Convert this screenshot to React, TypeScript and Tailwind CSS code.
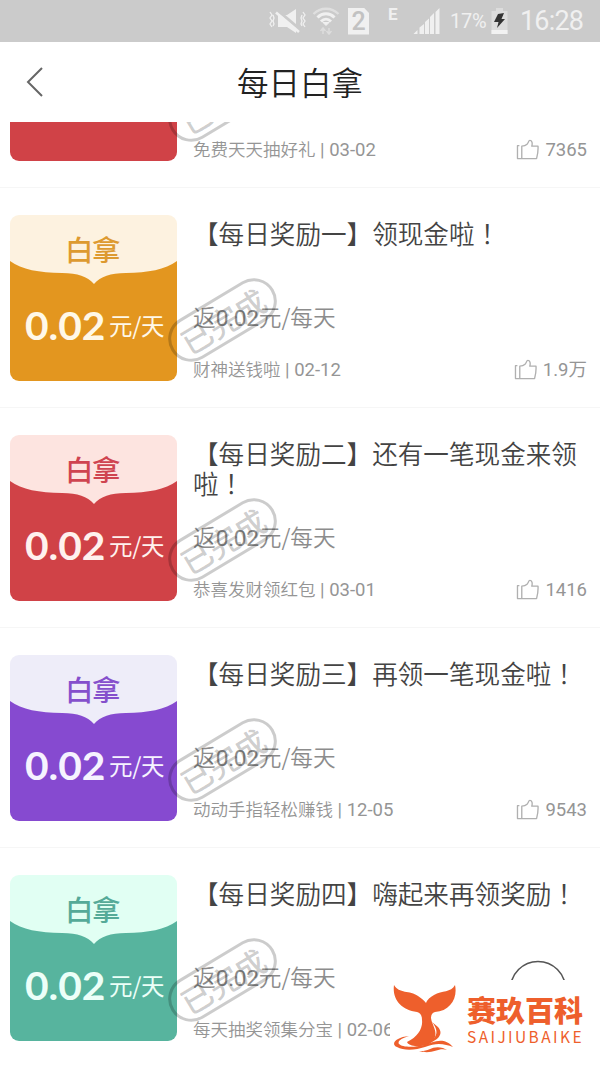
import React from "react";

type Theme = { fill: string; light: string; wave: string; ink: string; num: string };

const themes: Record<string, Theme> = {
  red: { fill: "bg-[#d04247]", light: "bg-[#fde4e0]", wave: "fill-[#d04247]", ink: "text-[#cf4450]", num: "text-[#fff1ee]" },
  orange: { fill: "bg-[#e3961f]", light: "bg-[#fdf2e0]", wave: "fill-[#e3961f]", ink: "text-[#dd9a30]", num: "text-[#fff8e8]" },
  purple: { fill: "bg-[#864ad0]", light: "bg-[#eeedf9]", wave: "fill-[#864ad0]", ink: "text-[#8550cc]", num: "text-[#f6f3ff]" },
  green: { fill: "bg-[#57b49e]", light: "bg-[#e1fff3]", wave: "fill-[#57b49e]", ink: "text-[#55aa98]", num: "text-[#ecfff8]" },
};

type Item = { theme: string; title: string; source: string; date: string; likes: string };

const items: Item[] = [
  { theme: "red", title: "", source: "免费天天抽好礼", date: "03-02", likes: "7365" },
  { theme: "orange", title: "【每日奖励一】领现金啦", source: "财神送钱啦", date: "02-12", likes: "1.9万" },
  { theme: "red", title: "【每日奖励二】还有一笔现金来领啦", source: "恭喜发财领红包", date: "03-01", likes: "1416" },
  { theme: "purple", title: "【每日奖励三】再领一笔现金啦", source: "动动手指轻松赚钱", date: "12-05", likes: "9543" },
  { theme: "green", title: "【每日奖励四】嗨起来再领奖励", source: "每天抽奖领集分宝", date: "02-06", likes: "" },
];

function StatusBar() {
  return (
    <header className="flex h-[42px] shrink-0 items-center bg-[#cbcbcb] pl-[268px] text-[#f0f0f0]">
      <svg className="h-[28px] w-[40px] shrink-0" viewBox="0 0 40 28" fill="none" stroke="currentColor" strokeWidth="1.7">
        <path d="M2 5l2 3-2 3 2 3-2 3 2 3M5 8l1 3-1 3 1 3-1 2M35 5l2 3-2 3 2 3-2 3 2 3M34 8l-1 3 1 3-1 3 1 2" strokeWidth="1.3" />
        <path d="M10 8h9l9-6v24l-9-6h-9z" fill="currentColor" stroke="none" />
        <path d="M9 3 32 22.500" stroke="#cbcbcb" strokeWidth="3" />
        <path d="M8 5.500 31 25" strokeWidth="2.6" />
      </svg>
      <svg className="ml-[4px] h-[30px] w-[28px] shrink-0" viewBox="0 0 28 30" fill="none" stroke="currentColor">
        <path d="M1.500 8c7-7 18-7 25 0" strokeWidth="2.400" opacity=".55" />
        <path d="M5.500 11.500c5-5 12-5 17 0M9 15.500c3-3 7-3 10 0" strokeWidth="3" />
        <path d="m11 16.500 3 3 3-3z" fill="currentColor" />
        <path d="M11 28v-6m-2.500 3L11 22l2.500 3M17 22v6m-2.500-3 2.500 3 2.500-3" strokeWidth="1.500" opacity=".5" />
      </svg>
      <div className="ml-[8px] flex h-[27px] w-[21px] items-center justify-center bg-[#f0f0f0] font-['Roboto',sans-serif] text-[25px] font-medium leading-none text-[#c2c2c2] [clip-path:polygon(0_0,75%_0,100%_20%,100%_100%,0_100%)]">2</div>
      <span className="-mt-[14px] ml-[19px] w-[10px] font-['Roboto',sans-serif] text-[17px] font-bold leading-none">E</span>
      <svg className="ml-[15px] h-[28px] w-[27px] shrink-0" viewBox="0 0 26 28" fill="currentColor">
        <path d="M0 27 4 23v4zM6 27v-6.500L10.500 17v10zM11.500 27V15l4-3.500V27zM16.500 27V10l4-4v21zM22 27V5l4-4v26z" />
      </svg>
      <span className="ml-[10px] w-[37px] font-['Roboto',sans-serif] text-[20px] leading-none tracking-[-0.3px]">17%</span>
      <svg className="ml-[4px] h-[28px] w-[17px] shrink-0" viewBox="0 0 17 28">
        <path d="M5 1h7v3h4.500v23H.5V4H5z" fill="#dcdcdc" />
        <path d="M.5 23h16v4H.5z" fill="#f2f2f2" />
        <path d="m7 7 6-1-2.500 6H14L6 21l1.500-6H3z" fill="#333" />
      </svg>
      <span className="ml-[12px] font-['Roboto',sans-serif] text-[27px] leading-none tracking-[-0.8px]">16:28</span>
    </header>
  );
}

function Card({ theme }: { theme: Theme }) {
  return (
    <div className="h-[166px] w-[167px] shrink-0">
      <div className={`relative h-[70px] rounded-t-[9px] pr-[3px] pt-[17px] text-center text-[28.500px] font-medium leading-[34px] tracking-[-1.5px] ${theme.light} ${theme.ink}`}>
        <svg className="absolute inset-0 h-full w-full" viewBox="0 0 167 70" preserveAspectRatio="none">
          <path className={theme.wave} d="M0 46C12 55 29 57.500 52 58C68 58.500 77 61 84 69C91 61 100 58.500 116 58C138 57.500 155 55 167 46V71H0Z" />
        </svg>
        <span className="relative">白拿</span>
      </div>
      <div className={`flex h-[96px] items-center whitespace-nowrap rounded-b-[9px] pb-[16px] pl-[15px] leading-[40px] ${theme.fill} ${theme.num}`}>
        <span className="w-[84px] origin-left scale-x-[1.07] font-['Lato',sans-serif] text-[38px] font-bold">0.02</span>
        <span className="text-[23.500px] tracking-[-0.3px]">元/天</span>
      </div>
    </div>
  );
}

function ThumbIcon() {
  return (
    <svg className="h-[21px] w-[23px]" viewBox="0 0 24 22" fill="none" stroke="#b0b0b0" strokeWidth="1.4" strokeLinejoin="round">
      <path d="M3.500 7H1.500V20.500H21.500C22.500 17 23.300 12 23 7.500H16.500C17.500 4 16.500 1.500 14.500 1.500C13 1.500 13 4 11.500 5.500C10 7 8.500 7.500 6 7.500V20.500" />
    </svg>
  );
}

function Stamp() {
  return (
    <div className="absolute left-[163px] top-[109px] flex h-[46px] w-[119px] rotate-[-31deg] items-center justify-center whitespace-nowrap rounded-full border-[3px] border-black/20 text-[31px] font-medium leading-none text-black/20">
      已完成
    </div>
  );
}

function Row({ item }: { item: Item }) {
  return (
    <li className="relative flex h-[220px] shrink-0 border-b border-[#f6f6f6] pl-[10px] pr-[13px] pt-[27px]">
      <Card theme={themes[item.theme]} />
      <div className="ml-[16px] flex h-[167px] min-w-0 flex-1 flex-col">
        <h2 className="h-[90px] pt-[3px] text-[25.6px] font-[350] leading-[30px] text-[#444]">
          {item.title}
          {item.title && <span className="font-['Noto_Sans_CJK_TC',sans-serif]" lang="zh-TW">！</span>}
        </h2>
        <p className="pt-[1px] text-[22.700px] font-[350] leading-[28px] text-[#8c8c8c]">
          返<span className="font-['Roboto',sans-serif] font-normal tracking-[-0.3px]">0.02</span>元/每天
        </p>
        <div className="mt-[24px] flex items-center justify-between text-[17.5px] font-[350] leading-[24px] text-[#959595]">
          <span className="whitespace-nowrap">
            {item.source}
            <span className="font-['Roboto',sans-serif] text-[18.500px] font-normal"> | {item.date}</span>
          </span>
          {item.likes && (
            <span className="flex items-center gap-[6px] font-['Roboto','Noto_Sans_CJK_SC',sans-serif] text-[18.500px] font-normal">
              <ThumbIcon />
              {item.likes}
            </span>
          )}
        </div>
      </div>
      <Stamp />
    </li>
  );
}

function Watermark() {
  return (
    <div className="absolute bottom-0 right-0 flex h-[87px] w-[210px] bg-white text-[#ee5f2c]">
      <svg className="ml-[3px] mt-[5px] h-[68px] w-[64px] shrink-0" viewBox="0 0 64 68" fill="currentColor">
        <path d="M1 0C6 9 17 5 25 11Q31 15 33 18Q35 13 41 10C49 5 58 8 62 0C65 13 57 26 42 27Q38 28 38 33C39 40 44 45 42 52C40 59 31 62 22 61Q15 60 14 57C25 52 30 43 29 35Q29 28 24 27C8 25-1 14 1 0Z" />
        <path d="M16 51C3 52-3 59 4 62C11 66 23 65 32 62C44 57 52 59 60 62C51 51 40 57 31 60C20 63 9 62 6 59C4 56 9 53 16 51Z" />
        <path d="M26 66C36 67 39 60 50 63L54 65C45 62 40 70 26 66Z" />
        <path d="M39 37C48 48 42 54 34 59C43 56 52 50 45 42Z" />
      </svg>
      <div className="ml-[10px] pt-[13px]">
        <div className="text-[29px] font-black leading-[32px]">赛玖百科</div>
        <div className="mt-[2px] text-[15.5px] leading-[18px] tracking-[2.4px]">SAIJIUBAIKE</div>
      </div>
    </div>
  );
}

export default function App() {
  return (
    <div className="relative flex h-[1067px] w-[600px] flex-col overflow-hidden bg-white font-['Noto_Sans_CJK_SC',sans-serif]">
      <StatusBar />
      <nav className="grid h-[80px] shrink-0 grid-cols-[100px_1fr_100px] items-center">
        <svg className="ml-[25px] h-[30px] w-[20px]" viewBox="0 0 20 30" fill="none" stroke="#666" strokeWidth="2">
          <path d="M17 1 3 15l14 14" />
        </svg>
        <h1 className="text-center text-[31.500px] font-[350] leading-none text-[#222]">每日白拿</h1>
      </nav>
      <main className="flex-1 overflow-hidden">
        <ul className="-mt-[154px] flex flex-col">
          {items.map((item, i) => (
            <Row key={i} item={item} />
          ))}
        </ul>
      </main>
      <svg className="absolute left-[508px] top-[959px] h-[21px] w-[60px]" viewBox="0 0 60 21" fill="none" stroke="#555" strokeWidth="1.6">
        <circle cx="30" cy="30" r="27.500" />
      </svg>
      <Watermark />
    </div>
  );
}
